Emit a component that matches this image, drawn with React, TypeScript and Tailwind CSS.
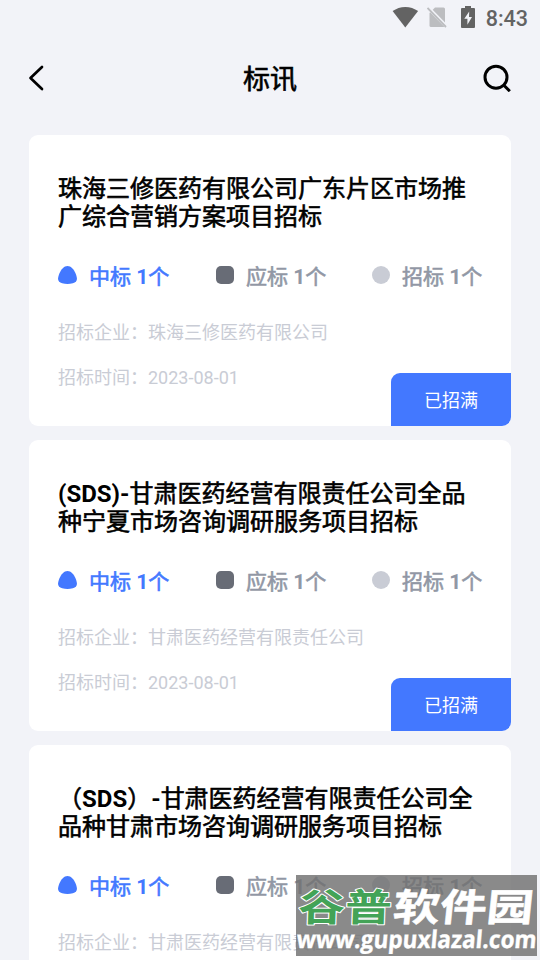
import React from "react";

type Tender = { lines: [string, string]; company: string; date: string };

const tenders: Tender[] = [
  {
    lines: ["珠海三修医药有限公司广东片区市场推", "广综合营销方案项目招标"],
    company: "珠海三修医药有限公司",
    date: "2023-08-01",
  },
  {
    lines: ["(SDS)-甘肃医药经营有限责任公司全品", "种宁夏市场咨询调研服务项目招标"],
    company: "甘肃医药经营有限责任公司",
    date: "2023-08-01",
  },
  {
    lines: ["（SDS）-甘肃医药经营有限责任公司全", "品种甘肃市场咨询调研服务项目招标"],
    company: "甘肃医药经营有限责任公司",
    date: "2023-08-01",
  },
];

/* Latin runs use true bold; Han runs use a lightly thickened regular weight. */
function Semi({ text }: { text: string }) {
  const runs = text.match(/[\x00-\x7f]+|[^\x00-\x7f]+/g) ?? [];
  return (
    <>
      {runs.map((run, i) =>
        run.charCodeAt(0) < 128 ? (
          <span key={i} className="font-bold">{run}</span>
        ) : (
          <span key={i} className="font-normal [-webkit-text-stroke:0.6px_currentColor]">{run}</span>
        ),
      )}
    </>
  );
}

function StatusBar() {
  return (
    <div className="flex h-[34px] items-center justify-end pr-3 text-[#636363]">
      <svg className="mr-[8px]" width="27" height="22" viewBox="0 0 27 22" fill="currentColor">
        <path d="M.6 5.1C4.2 2.4 8.7.9 13.3.9S22.500 2.400 26.100 5.100L13.300 21.400Z" />
      </svg>
      <svg className="mr-[14px]" width="20" height="22" viewBox="0 0 20 22">
        <path d="M8 1.500h8.500q1.500 0 1.500 1.500v16.500q0 1.500-1.500 1.500h-12.500q-1.500 0-1.500-1.500V7Z" fill="#bcbdc0" />
        <path d="M1 1.500L19.500 20.500" stroke="#f2f3f8" strokeWidth="3.500" />
        <path d="M.5 2L19 21" stroke="#bcbdc0" strokeWidth="1.800" />
      </svg>
      <svg className="mr-[11px]" width="14" height="22" viewBox="0 0 14 22">
        <path d="M4 0h6v2h3q1 0 1 1v18q0 1-1 1H1q-1 0-1-1V3q0-1 1-1h3Z" fill="currentColor" />
        <path d="M8.200 5.500L3.300 12.800H6.400V18.700L11 11H8Z" fill="#f2f3f8" />
      </svg>
      <span className="mt-[3px] text-[21.500px] leading-6 font-medium">8:43</span>
    </div>
  );
}

function Header() {
  return (
    <header className="flex h-[88px] items-center justify-between pr-[29px] pl-[28px]">
      <svg width="28" height="26" viewBox="0 0 28 26" fill="none" stroke="#000" strokeWidth="2.700" strokeLinecap="round" strokeLinejoin="round">
        <path d="M14 2L2.500 13L14 24" />
      </svg>
      <h1 className="mt-[3px] ml-[1px] text-[27px] leading-8 text-black"><Semi text="标讯" /></h1>
      <svg width="28" height="28" viewBox="0 0 28 28" fill="none" stroke="#000" strokeWidth="3">
        <circle cx="13" cy="13.200" r="11" />
        <path d="M20.300 20.700L26.800 27.200" />
      </svg>
    </header>
  );
}

function Card({ t }: { t: Tender }) {
  return (
    <article className="flex h-[291px] shrink-0 flex-col overflow-hidden rounded-[9px] bg-white pt-10 pl-[29px]">
      <h2 className="text-[24px] leading-7 whitespace-nowrap text-black">
        {t.lines.map((l) => (
          <div key={l}><Semi text={l} /></div>
        ))}
      </h2>
      <div className="mt-[30px] flex h-8 items-center text-[21px] leading-8 whitespace-nowrap text-[#9197a5]">
        <div className="flex w-[158px] items-center text-[#4378ff]">
          <svg className="mr-[12px] -mt-[4px]" width="19" height="18" viewBox="0 0 19 18" fill="currentColor">
            <path d="M9.500 0C13 0 15.800 3.200 17.600 7.500C19.800 13 19.600 16 14.800 17.300Q9.500 18.500 4.200 17.300C-.6 16-.8 13 1.400 7.500C3.200 3.200 6 0 9.500 0Z" />
          </svg>
          <span><Semi text="中标 1个" /></span>
        </div>
        <div className="flex w-[156px] items-center">
          <i className="mr-[12px] -mt-[4px] size-[18px] rounded-[5px] bg-[#686c76]" />
          <span><Semi text="应标 1个" /></span>
        </div>
        <div className="flex items-center">
          <i className="mr-[12px] -mt-[4px] size-[18px] rounded-full bg-[#c9ccd5]" />
          <span><Semi text="招标 1个" /></span>
        </div>
      </div>
      <p className="mt-[26px] text-[18px] leading-7 text-[#c9ccd5]">招标企业：{t.company}</p>
      <div className="flex flex-1 items-start justify-between">
        <p className="mt-[17px] text-[18px] leading-7 text-[#c9ccd5]">招标时间：{t.date}</p>
        <button className="mt-auto h-[53px] w-[120px] rounded-tl-[9px] bg-[#4378ff] pt-[2px] text-[18px] leading-7 text-white">已招满</button>
      </div>
    </article>
  );
}

function Watermark() {
  return (
    <svg className="absolute top-[875px] left-[296px]" width="241" height="81" viewBox="0 0 241 81">
      <rect width="241" height="81" fill="#707070" fillOpacity="0.82" />
      <g fontFamily="'Noto Sans CJK SC', sans-serif" fontWeight="700" fontSize="38" strokeLinejoin="round">
        <g transform="translate(2 46) skewX(-2) scale(1.230 1)">
          <text x="0" y="0" fill="#43a357" stroke="#fff" strokeWidth="2" paintOrder="stroke">谷普</text>
        </g>
        <g transform="translate(96 46) skewX(-6) scale(1.230 1)">
          <text x="0" y="0" fill="#fff" stroke="#fff" strokeWidth="0.500">软件园</text>
        </g>
      </g>
      <g transform="translate(0 73) skewX(-5)">
        <text x="0" y="0" textLength="240" lengthAdjust="spacingAndGlyphs" fontFamily="'Open Sans', sans-serif" fontWeight="700" fontSize="24.500" fill="#fff" stroke="#fff" strokeWidth="0.400">www.gupuxlazal.com</text>
      </g>
    </svg>
  );
}

export default function App() {
  return (
    <div className="relative h-[960px] w-[540px] overflow-hidden bg-[#f2f3f8] font-[Roboto,'Noto_Sans_CJK_SC',sans-serif]">
      <StatusBar />
      <Header />
      <main className="mt-[13px] flex flex-col gap-[14px] px-[29px]">
        {tenders.map((t) => <Card key={t.lines[0]} t={t} />)}
      </main>
      <Watermark />
    </div>
  );
}
